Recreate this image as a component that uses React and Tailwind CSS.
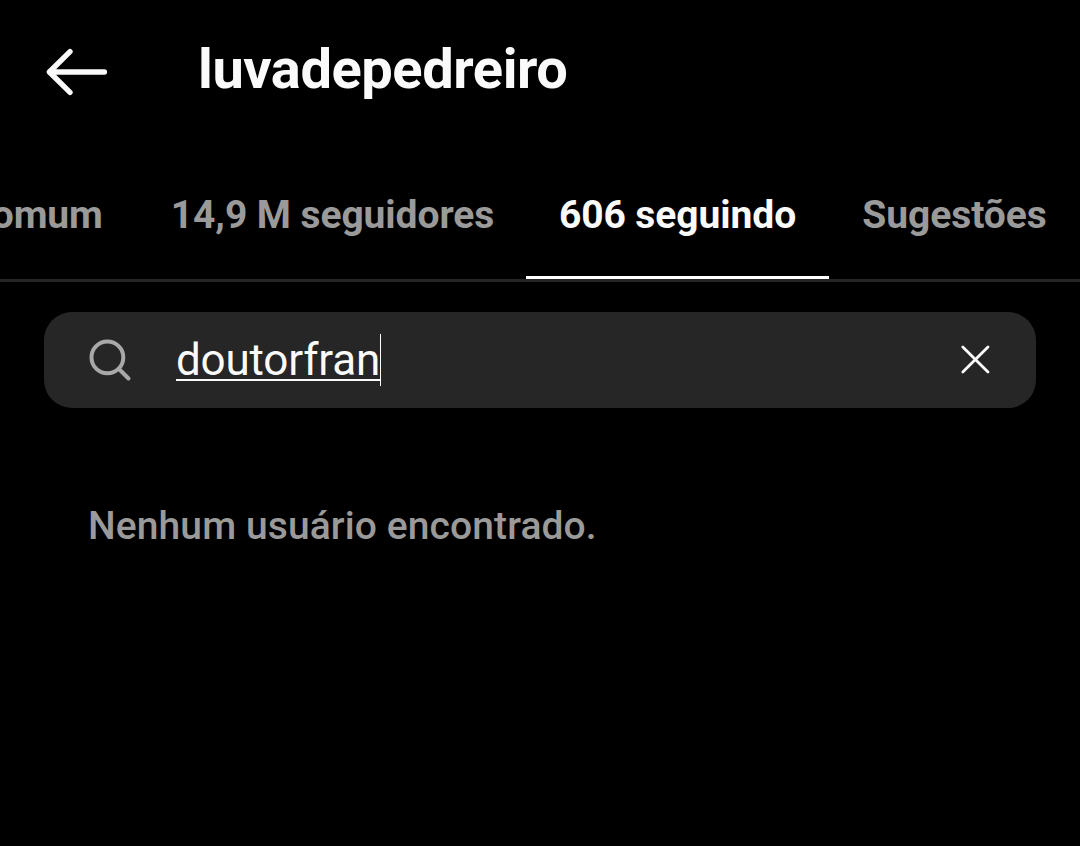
import React, { useState } from "react";

const TABS = [
  { id: "mutual", label: "em comum", width: "w-[268px]" },
  { id: "followers", label: "14,9 M seguidores", width: "w-[387px]" },
  { id: "following", label: "606 seguindo", width: "w-[303px]" },
  { id: "suggested", label: "Sugestões", width: "w-[251px]" },
];

function BackIcon() {
  return (
    <svg width="64" height="52" viewBox="0 0 64 52" fill="none" stroke="currentColor" strokeWidth="5.4" strokeLinecap="round" strokeLinejoin="round">
      <path d="M26 5.6L5.4 26L26 46.4" />
      <path d="M6 26H60.4" />
    </svg>
  );
}

function SearchIcon() {
  return (
    <svg width="44" height="44" viewBox="0 0 44 44" fill="none" stroke="currentColor" strokeWidth="4" strokeLinecap="round">
      <circle cx="19.4" cy="19.4" r="15.9" />
      <path d="M31 31L40.5 40.5" />
    </svg>
  );
}

function ClearIcon() {
  return (
    <svg width="32" height="32" viewBox="0 0 32 32" fill="none" stroke="currentColor" strokeWidth="2.8" strokeLinecap="round">
      <path d="M3.8 2.9L29 28.1" />
      <path d="M29 2.9L3.8 28.1" />
    </svg>
  );
}

export default function App() {
  const [tab, setTab] = useState("following");
  const [query, setQuery] = useState("doutorfran");

  return (
    <div className="h-[846px] w-[1080px] overflow-hidden bg-black font-['Roboto',sans-serif] text-[#fafafa]">
      {/* top bar */}
      <header className="flex h-[138px] items-center pl-[44px]">
        <button className="pt-[5px]" aria-label="Voltar">
          <BackIcon />
        </button>
        <h1 className="ml-[90px] text-[56px] leading-[66px] font-bold tracking-[-0.43px]">luvadepedreiro</h1>
      </header>

      {/* tabs, scrolled to the end */}
      <nav className="flex h-[144px] justify-end overflow-hidden border-b-3 border-[#262626]">
        {TABS.map((t) => (
          <button
            key={t.id}
            onClick={() => setTab(t.id)}
            className={`${t.width} shrink-0 border-b-3 pt-[16px] text-[39px] leading-[46px] font-bold tracking-[-0.08px] whitespace-nowrap ${
              t.id === tab ? "border-white" : "border-transparent text-[#9a9a9a]"
            }`}
          >
            {t.label}
          </button>
        ))}
      </nav>

      {/* search */}
      <div className="mx-[44px] mt-[30px] flex h-[96px] items-center rounded-[28px] bg-[#262626] pr-[45px] pl-[44px]">
        <span className="text-[#a8a8a8]">
          <SearchIcon />
        </span>
        <span className="ml-[44px] text-[44px] leading-[52px] tracking-[-0.2px] underline decoration-[2px] underline-offset-[4px]">
          {query}
        </span>
        <span className="h-[52px] w-px bg-white" />
        <button className="ml-auto" aria-label="Limpar" onClick={() => setQuery("")}>
          <ClearIcon />
        </button>
      </div>

      <p className="mt-[95px] pl-[88px] text-[39px] leading-[46px] font-medium tracking-[0.1px] text-[#9a9a9a]">
        Nenhum usuário encontrado.
      </p>
    </div>
  );
}
